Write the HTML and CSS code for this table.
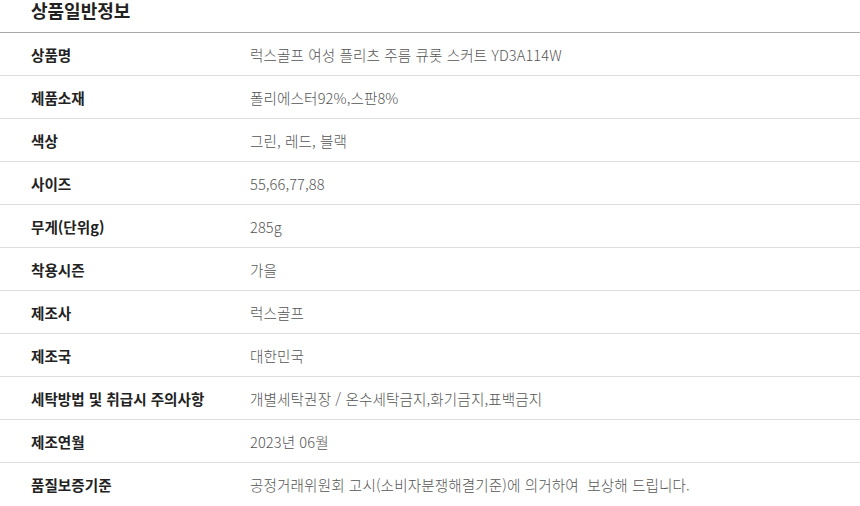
FILE: index.html
```html
<!DOCTYPE html>
<html lang="ko">
<head>
<meta charset="utf-8">
<link rel="stylesheet" href="styles.css">
</head>
<body>
<div class="info">
  <h3 class="info-title">상품일반정보</h3>
  <dl class="info-table">
    <div class="row"><dt>상품명</dt><dd>럭스골프 여성 플리츠 주름 큐롯 스커트 YD3A114W</dd></div>
    <div class="row"><dt>제품소재</dt><dd>폴리에스터92%,스판8%</dd></div>
    <div class="row"><dt>색상</dt><dd>그린, 레드, 블랙</dd></div>
    <div class="row"><dt>사이즈</dt><dd>55,66,77,88</dd></div>
    <div class="row"><dt>무게(단위g)</dt><dd>285g</dd></div>
    <div class="row"><dt>착용시즌</dt><dd>가을</dd></div>
    <div class="row"><dt>제조사</dt><dd>럭스골프</dd></div>
    <div class="row"><dt>제조국</dt><dd>대한민국</dd></div>
    <div class="row"><dt>세탁방법 및 취급시 주의사항</dt><dd>개별세탁권장 / 온수세탁금지,화기금지,표백금지</dd></div>
    <div class="row"><dt>제조연월</dt><dd>2023년 06월</dd></div>
    <div class="row"><dt>품질보증기준</dt><dd>공정거래위원회 고시(소비자분쟁해결기준)에 의거하여&nbsp; 보상해 드립니다.</dd></div>
  </dl>
</div>
</body>
</html>
```
FILE: styles.css
```css
html, body {
  margin: 0;
  padding: 0;
  background: #fff;
}
body {
  font-family: "Noto Sans CJK KR", "Noto Sans", sans-serif;
  color: #222;
}
.info {
  width: 860px;
  overflow: hidden;
}
.info-title {
  margin: 0;
  height: 32px;
  padding-left: 31px;
  font-size: 18px;
  line-height: 20px;
  font-weight: 700;
  color: #222;
  box-sizing: border-box;
}
.info-table {
  margin: 0;
  border-top: 1px solid #aaa;
}
.row {
  display: flex;
  align-items: center;
  height: 43px;
  box-sizing: border-box;
  border-bottom: 1px solid #ddd;
}
.row:last-child {
  border-bottom: none;
}
.row dt {
  width: 219px;
  padding-left: 31px;
  font-size: 14.6px;
  font-weight: 700;
  color: #222;
}
.row dd {
  margin: 0;
  font-size: 14.6px;
  font-weight: 300;
  letter-spacing: 0.1px;
  color: #555;
}
```
